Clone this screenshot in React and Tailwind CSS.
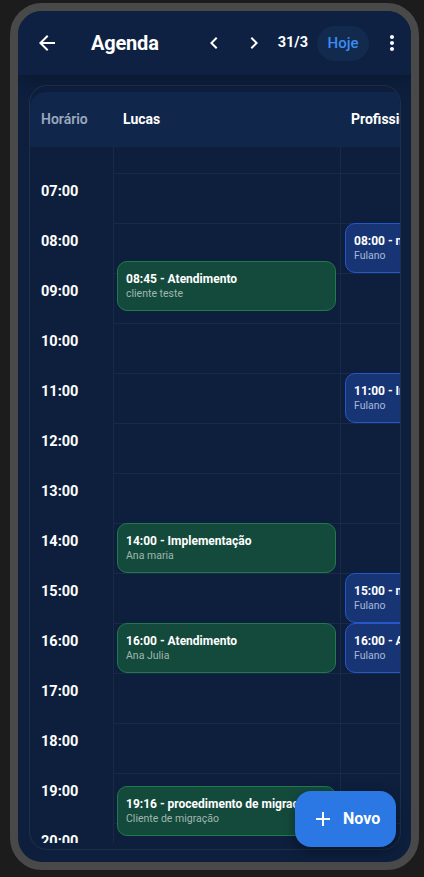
import React from 'react';

const HOURS = ['07:00', '08:00', '09:00', '10:00', '11:00', '12:00', '13:00', '14:00', '15:00', '16:00', '17:00', '18:00', '19:00', '20:00'];

const lucas = [
  { start: '08:45', title: '08:45 - Atendimento', who: 'cliente teste' },
  { start: '14:00', title: '14:00 - Implementação', who: 'Ana maria' },
  { start: '16:00', title: '16:00 - Atendimento', who: 'Ana Julia' },
  { start: '19:16', title: '19:16 - procedimento de migração', who: 'Cliente de migração' },
];

const profissional = [
  { start: '08:00', title: '08:00 - nova reunião', who: 'Fulano' },
  { start: '11:00', title: '11:00 - Implementação', who: 'Fulano' },
  { start: '15:00', title: '15:00 - nova reunião', who: 'Fulano' },
  { start: '16:00', title: '16:00 - Atendimento', who: 'Fulano' },
];

const OFFSET = 26;
const ROW = 50;

function topFor(time) {
  const [h, m] = time.split(':').map(Number);
  return OFFSET + (h - 7) * ROW + (m * ROW) / 60;
}

function GridLines() {
  return (
    <div>
      <div className="h-[26px]" />
      {HOURS.map((h) => (
        <div key={h} className="h-[50px] border-t border-white/[0.05]" />
      ))}
    </div>
  );
}

function Event({ ev, tone }) {
  const green = tone === 'green';
  return (
    <div
      className={
        'absolute w-[219px] h-[50px] rounded-[10px] border pl-[8px] pr-[4px] pt-[10px] overflow-hidden whitespace-nowrap ' +
        (green ? 'left-[3px] bg-[#144a3c] border-[#1f7a4c]' : 'left-[4px] bg-[#173575] border-[#2656c8]')
      }
      style={{ top: topFor(ev.start) }}
    >
      <p className="text-[12px] leading-[15px] font-bold text-white">{ev.title}</p>
      <p className={'text-[10.5px] leading-[14px] ' + (green ? 'text-[#9fb8ae]' : 'text-[#a9b8d6]')}>{ev.who}</p>
    </div>
  );
}

export default function App() {
  return (
    <div className="w-[424px] h-[877px] bg-[#1c1c1c] pl-[10px] pt-[3px]" style={{ fontFamily: 'Roboto, "Noto Sans", sans-serif' }}>
      <div className="relative w-[409px] h-[867px] rounded-[32px] border-[8px] border-[#494949] bg-[#0d1f3d] overflow-hidden">
        {/* Top bar */}
        <div className="h-[64px] flex items-center pr-[7px] bg-[#0e2142] shadow-[0_6px_14px_rgba(0,0,0,0.18)]">
          <svg viewBox="0 0 24 24" className="w-6 h-6 ml-[17px] fill-white">
            <path d="M20 11H7.83l5.59-5.59L12 4l-8 8 8 8 1.41-1.41L7.83 13H20v-2z" />
          </svg>
          <h1 className="ml-[32px] text-[20px] font-bold text-white tracking-[-0.2px]">Agenda</h1>
          <div className="flex-1" />
          <button className="w-6 h-6 flex items-center justify-center">
            <svg viewBox="0 0 24 24" className="w-6 h-6 fill-white">
              <path d="M15.41 7.41L14 6l-6 6 6 6 1.41-1.41L10.83 12z" />
            </svg>
          </button>
          <button className="ml-[16px] w-6 h-6 flex items-center justify-center">
            <svg viewBox="0 0 24 24" className="w-6 h-6 fill-white">
              <path d="M10 6L8.59 7.41 13.17 12l-4.58 4.59L10 18l6-6z" />
            </svg>
          </button>
          <span className="ml-[12px] text-[14.5px] font-bold text-white">31/3</span>
          <button className="ml-[9px] w-[52px] h-[35px] rounded-full bg-[#122a4e] text-[15px] font-medium text-[#3b8cf2]">Hoje</button>
          <svg viewBox="0 0 24 24" className="ml-[11px] w-6 h-6 fill-white">
            <path d="M12 8c1.1 0 2-.9 2-2s-.9-2-2-2-2 .9-2 2 .9 2 2 2zm0 2c-1.1 0-2 .9-2 2s.9 2 2 2 2-.9 2-2-.9-2-2-2zm0 6c-1.1 0-2 .9-2 2s.9 2 2 2 2-.9 2-2-.9-2-2-2z" />
          </svg>
        </div>

        {/* Schedule card */}
        <div className="mt-[10px] ml-[11px] w-[372px] h-[765px] rounded-[18px] border border-white/[0.07] pt-[6px] pb-[6px] overflow-hidden">
          <div className="h-full overflow-hidden">
            <div className="w-[560px]">
              {/* column header */}
              <div className="flex h-[55px] items-center bg-[#10264a] rounded-t-[16px] text-[14px]">
                <div className="w-[84px] pl-[11px] font-semibold text-[#9aa8bd]">Horário</div>
                <div className="w-[227px] pl-[9px] font-bold text-white">Lucas</div>
                <div className="pl-[10px] font-bold text-white">Profissional</div>
              </div>
              {/* body */}
              <div className="flex h-[696px] overflow-hidden">
                <div className="w-[84px] shrink-0 border-r border-white/[0.05]">
                  <div className="h-[26px]" />
                  {HOURS.map((h) => (
                    <div key={h} className="h-[50px] pl-[11px] pt-[6px]">
                      <span className="text-[14.5px] leading-[20px] font-bold text-white">{h}</span>
                    </div>
                  ))}
                </div>
                <div className="relative w-[227px] shrink-0 border-r border-white/[0.05]">
                  <GridLines />
                  {lucas.map((ev) => (
                    <Event key={ev.title} ev={ev} tone="green" />
                  ))}
                </div>
                <div className="relative w-[240px] shrink-0">
                  <GridLines />
                  {profissional.map((ev) => (
                    <Event key={ev.title} ev={ev} tone="blue" />
                  ))}
                </div>
              </div>
            </div>
          </div>
        </div>

        {/* Floating action */}
        <button className="absolute right-[15px] bottom-[15px] w-[101px] h-[56px] rounded-[16px] bg-[#2b78e4] shadow-[0_4px_12px_rgba(0,0,0,0.35)] flex items-center pl-[16px] gap-[8px]">
          <svg viewBox="0 0 24 24" className="w-6 h-6 fill-white">
            <path d="M19 13h-6v6h-2v-6H5v-2h6V5h2v6h6v2z" />
          </svg>
          <span className="text-[16px] font-bold text-white">Novo</span>
        </button>
      </div>
    </div>
  );
}
